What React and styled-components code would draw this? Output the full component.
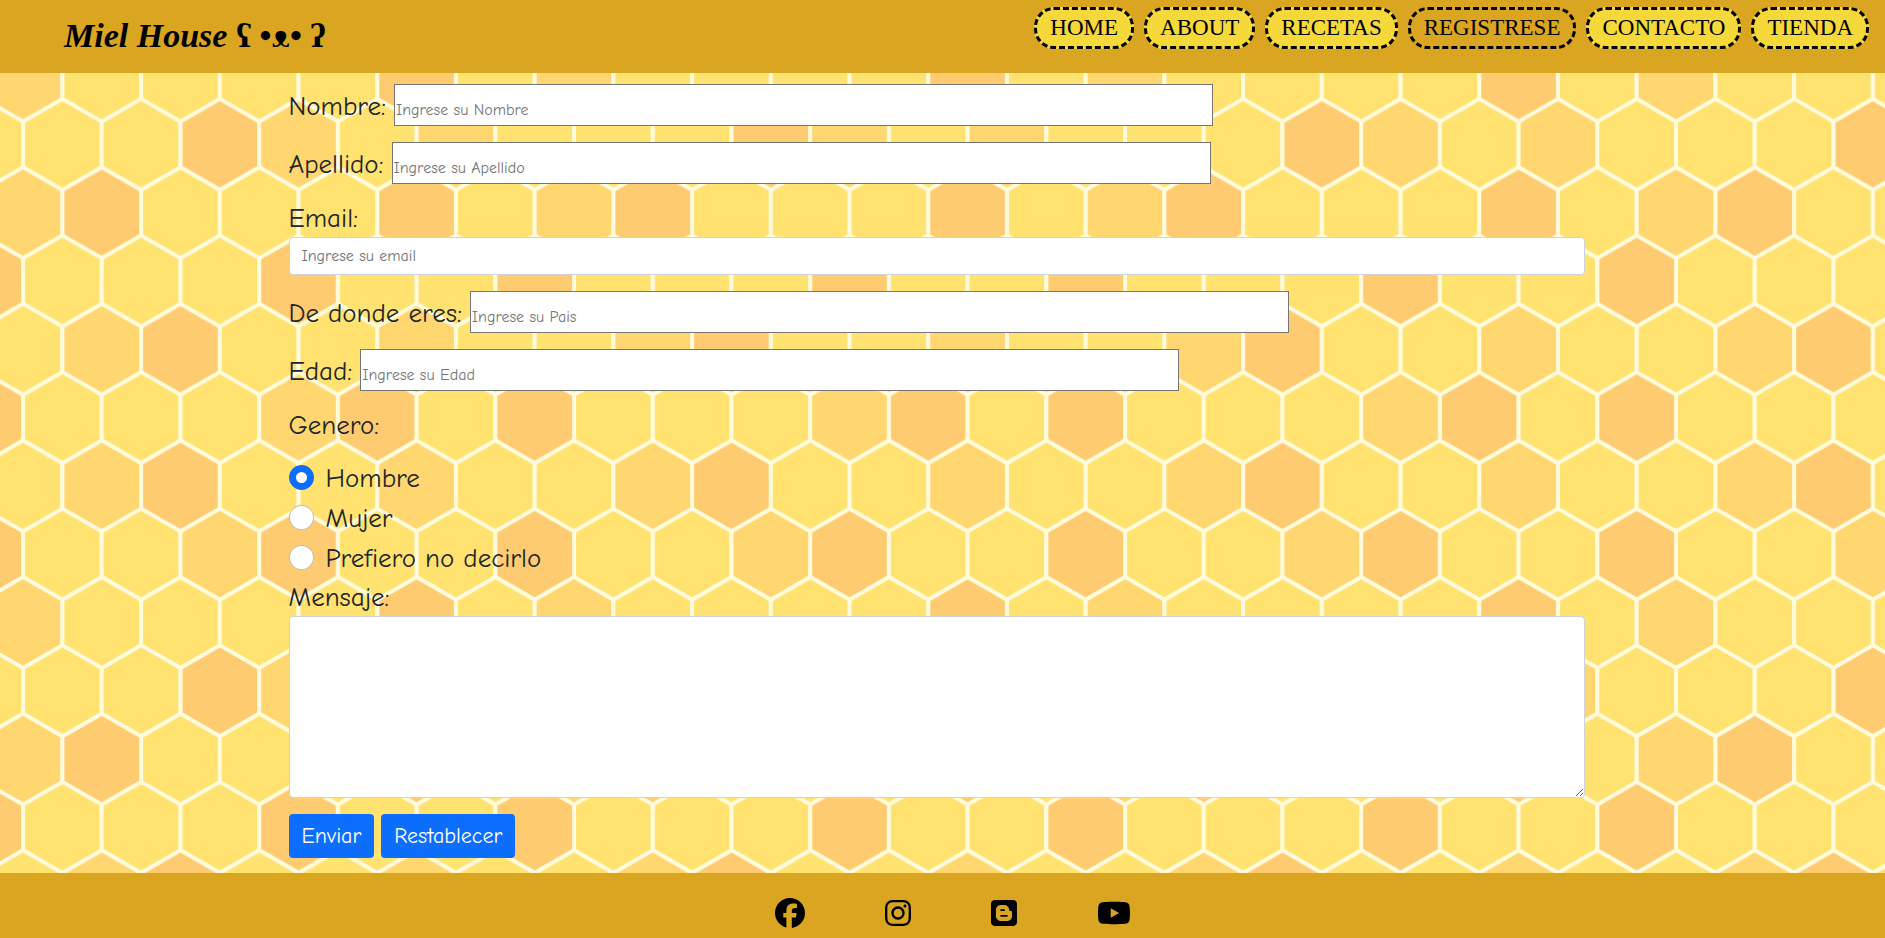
import React from "react";
import styled, { createGlobalStyle } from "styled-components";
import { FaBlogger, FaFacebook, FaInstagram, FaYoutube } from "react-icons/fa6";

const GlobalStyle = createGlobalStyle`
  *, *::before, *::after { box-sizing: border-box; }
  body {
    margin: 0;
    color: #212529;
    font-family: "Comic Sans MS", "Comic Neue", "Open Sans", sans-serif;
    font-size: 27px;
    line-height: 37px;
  }
`;

const Page = styled.div`
  min-height: 100vh;
  display: flex;
  flex-direction: column;
`;

const Header = styled.header`
  min-height: 73px;
  padding: 7px 16px 0 64px;
  display: flex;
  justify-content: space-between;
  align-items: flex-start;
  background: #daa520;
`;

const Brand = styled.h1`
  margin: 9px 0 0;
  color: #000;
  font: italic bold 34px/40px "Liberation Serif", serif;
  white-space: nowrap;
`;

const Face = styled.span`
  font-style: normal;
`;

const Nav = styled.nav`
  display: flex;
  flex-wrap: wrap;
  gap: 10px;
`;

const NavLink = styled.a`
  height: 42px;
  padding: 0 13px;
  border: 3px dashed #000;
  border-radius: 20px;
  background: ${(p) => (p.$current ? "transparent" : "#f5d93b")};
  color: #000;
  font: 23px/36px "Liberation Serif", serif;
  text-decoration: none;
  text-transform: uppercase;
`;

const Main = styled.main`
  display: grid;
  flex: 1;

  > * {
    grid-area: 1 / 1;
    min-width: 0;
  }
`;

const Comb = styled.svg`
  width: 100%;
  height: 100%;
`;

const FormArea = styled.div`
  position: relative;
  padding-right: 12px;
`;

const Form = styled.form`
  max-width: 1320px;
  margin: 0 auto;
  padding: 11px 12px 15px;
  display: flex;
  flex-direction: column;
  gap: 16px;
`;

const InlineField = styled.div`
  height: 42px;
  display: flex;
  align-items: baseline;
  gap: 8px;
`;

const BlockField = styled.div`
  display: flex;
  flex-direction: column;
`;

const Label = styled.label`
  white-space: nowrap;
`;

const PlainInput = styled.input`
  flex: 0 1 819px;
  min-width: 0;
  height: 42px;
  padding: 9px 1px 0;
  border: 1px solid #767676;
  border-radius: 0;
  background: #fff;
  font: inherit;
  font-size: 16px;

  &::placeholder { color: #757575; }
`;

const RoundedInput = styled.input`
  width: 100%;
  height: 38px;
  padding: 6px 12px;
  border: 1px solid #ced4da;
  border-radius: 4px;
  background: #fff;
  font: inherit;
  font-size: 16px;

  &::placeholder { color: #6c757d; }
`;

const Group = styled.fieldset`
  margin: 0;
  padding: 0;
  border: 0;
`;

const Legend = styled.legend`
  margin-bottom: 15px;
  padding: 0;
`;

const Choice = styled.label`
  height: 40px;
  display: flex;
  gap: 12px;
  line-height: 40px;
`;

const Radio = styled.input`
  appearance: none;
  width: 25px;
  height: 25px;
  margin: 6px 0 0;
  border: 1px solid rgba(0, 0, 0, 0.25);
  border-radius: 50%;
  background: #fff;

  &:checked {
    border: 7px solid #0d6efd;
  }
`;

const Message = styled.textarea`
  display: block;
  width: 100%;
  height: 182px;
  padding: 6px 12px;
  border: 1px solid #ced4da;
  border-radius: 4px;
  background: #fff;
  font: inherit;
  font-size: 16px;
  resize: vertical;
`;

const Actions = styled.div`
  display: flex;
  gap: 7px;
`;

const Button = styled.button`
  height: 44px;
  padding: 0 13px;
  border: 0;
  border-radius: 4px;
  background: #0d6efd;
  color: #fff;
  font: inherit;
  font-size: 22px;
`;

const Footer = styled.footer`
  padding: 25px 0 10px 20px;
  display: flex;
  justify-content: center;
  gap: 80px;
  background: #daa520;
`;

const Social = styled.a`
  display: flex;
  color: #000;

  svg {
    flex: none;
    width: ${(p) => p.$width}px;
    height: 30px;
  }
`;

const CELL = 551 / 7;
const PITCH = 68.3;
const SIDE = 45.6;
const SLANT = PITCH - SIDE;
const TONES = { y: "#ffe26f", l: "#ffd66f", o: "#ffcb70" };

/* One letter per cell; the block repeats in both directions. */
const ROWS = ["lyyyyoy", "yyolyly", "loyyyoy", "yyyoyyo", "yloyyly", "yyyloyo", "yloyyly", "yyloyyo"];

function hexPoints(cx, top) {
  const half = CELL / 2;
  return [
    [cx, top - SLANT],
    [cx + half, top],
    [cx + half, top + SIDE],
    [cx, top + SIDE + SLANT],
    [cx - half, top + SIDE],
    [cx - half, top],
  ]
    .map((point) => point.map((n) => n.toFixed(2)).join(","))
    .join(" ");
}

function Honeycomb() {
  const cells = [];
  for (let row = -1; row <= 8; row++) {
    const tones = ROWS[(row + 8) % 8];
    for (let col = -1; col <= 7; col++) {
      const cx = col * CELL + (row % 2 ? CELL / 2 : 0);
      cells.push(
        <polygon
          key={`${row}:${col}`}
          points={hexPoints(cx, row * PITCH + SLANT)}
          fill={TONES[tones[(col + 7) % 7]]}
        />
      );
    }
  }
  return (
    <Comb aria-hidden="true">
      <defs>
        <pattern
          id="comb"
          width={CELL * 7}
          height={PITCH * 8}
          patternUnits="userSpaceOnUse"
          patternTransform="translate(23.1 -42.3)"
        >
          <g stroke="#fffbdc" strokeWidth="4">{cells}</g>
        </pattern>
      </defs>
      <rect width="100%" height="100%" fill="url(#comb)" />
    </Comb>
  );
}

const links = ["Home", "About", "Recetas", "Registrese", "Contacto", "Tienda"];

const socials = [
  ["Facebook", FaFacebook, 30],
  ["Instagram", FaInstagram, 26],
  ["Blogger", FaBlogger, 26],
  ["YouTube", FaYoutube, 34],
];

const genders = [
  ["hombre", "Hombre"],
  ["mujer", "Mujer"],
  ["otro", "Prefiero no decirlo"],
];

function TextField({ id, label, placeholder }) {
  return (
    <InlineField>
      <Label htmlFor={id}>{label}</Label>
      <PlainInput id={id} name={id} type="text" placeholder={placeholder} />
    </InlineField>
  );
}

export default function App() {
  return (
    <Page>
      <GlobalStyle />
      <Header>
        <Brand>
          Miel House <Face>ʕ •ᴥ• ʔ</Face>
        </Brand>
        <Nav>
          {links.map((name) => (
            <NavLink key={name} href={`#${name.toLowerCase()}`} $current={name === "Registrese"}>
              {name}
            </NavLink>
          ))}
        </Nav>
      </Header>
      <Main>
        <Honeycomb />
        <FormArea>
          <Form>
            <TextField id="nombre" label="Nombre:" placeholder="Ingrese su Nombre" />
            <TextField id="apellido" label="Apellido:" placeholder="Ingrese su Apellido" />
            <BlockField>
              <Label htmlFor="email">Email:</Label>
              <RoundedInput id="email" name="email" type="email" placeholder="Ingrese su email" />
            </BlockField>
            <TextField id="pais" label="De donde eres:" placeholder="Ingrese su Pais" />
            <TextField id="edad" label="Edad:" placeholder="Ingrese su Edad" />
            <div>
              <Group>
                <Legend>Genero:</Legend>
                {genders.map(([value, text], i) => (
                  <Choice key={value}>
                    <Radio type="radio" name="genero" value={value} defaultChecked={i === 0} />
                    {text}
                  </Choice>
                ))}
              </Group>
              <BlockField>
                <Label htmlFor="mensaje">Mensaje:</Label>
                <Message id="mensaje" name="mensaje" />
              </BlockField>
            </div>
            <Actions>
              <Button type="submit">Enviar</Button>
              <Button type="reset">Restablecer</Button>
            </Actions>
          </Form>
        </FormArea>
      </Main>
      <Footer>
        {socials.map(([name, Icon, width]) => (
          <Social key={name} href={`#${name.toLowerCase()}`} aria-label={name} $width={width}>
            <Icon />
          </Social>
        ))}
      </Footer>
    </Page>
  );
}
